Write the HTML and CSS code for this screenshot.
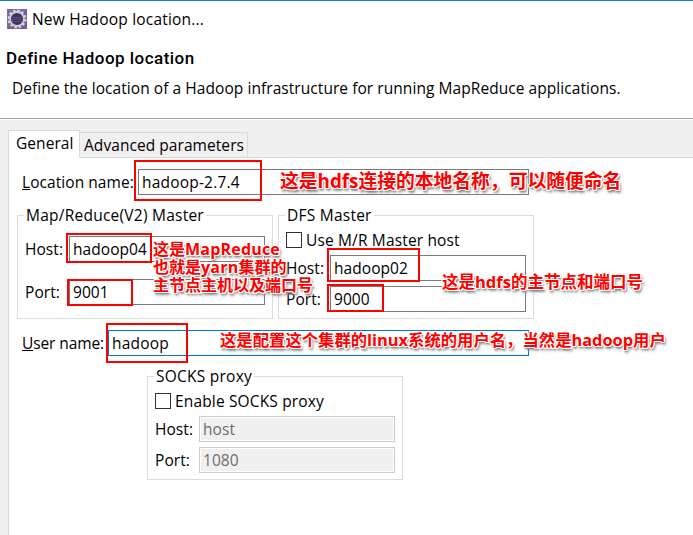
FILE: index.html
```html
<!DOCTYPE html>
<html lang="en">
<head>
<meta charset="utf-8">
<title>New Hadoop location...</title>
<link rel="stylesheet" href="styles.css">
</head>
<body>
<div class="dialog">
  <header class="header">
    <div class="titlebar">
      <svg class="app-icon" viewBox="0 0 20 20">
        <rect width="20" height="20" fill="#76599b"/>
        <path d="M0 0h20L0 20z" fill="#8a72aa" opacity=".55"/>
        <circle cx="10" cy="10" r="8.4" fill="none" stroke="#dcd8da" stroke-width="2" stroke-dasharray="2.6 1.8"/>
        <circle cx="10" cy="10" r="7" fill="#3d3358" stroke="#d0ccce" stroke-width="1.8"/>
        <path d="M4.5 8.5h11M4 10.5h12M4.5 12.5h11" stroke="#5f5088" stroke-width="1"/>
      </svg>
      <span class="title">New Hadoop location...</span>
    </div>
    <h1 class="heading">Define Hadoop location</h1>
    <p class="description">Define the location of a Hadoop infrastructure for running MapReduce applications.</p>
  </header>
  <main class="content">
    <nav class="tabs">
      <div class="tab active">General</div>
      <div class="tab advanced">Advanced parameters</div>
    </nav>
    <section class="page">
      <div class="row location"><label class="label"><u>L</u>ocation name:</label><div class="field">hadoop-2.7.4</div></div>
      <div class="groups">
        <div class="group master">
          <span class="legend">Map/Reduce(V2) Master</span>
          <div class="row"><label class="label">Host:</label><div class="field">hadoop04</div></div>
          <div class="row"><label class="label">Port:</label><div class="field">9001</div></div>
        </div>
        <div class="group dfs">
          <span class="legend">DFS Master</span>
          <div class="check"><span class="box"></span><span class="check-label">Use M/R Master host</span></div>
          <div class="row"><label class="label">Host:</label><div class="field">hadoop02</div></div>
          <div class="row"><label class="label">Port:</label><div class="field">9000</div></div>
        </div>
      </div>
      <div class="row user"><label class="label"><u>U</u>ser name:</label><div class="field focused">hadoop</div></div>
      <div class="group socks">
        <span class="legend">SOCKS proxy</span>
        <div class="check"><span class="box"></span><span class="check-label">Enable SOCKS proxy</span></div>
        <div class="row"><label class="label">Host:</label><div class="field disabled">host</div></div>
        <div class="row"><label class="label">Port:</label><div class="field disabled">1080</div></div>
      </div>
    </section>
  </main>
  <div class="mark mark-location"></div>
  <div class="mark mark-host"></div>
  <div class="mark mark-port"></div>
  <div class="mark mark-dfs-host"></div>
  <div class="mark mark-dfs-port"></div>
  <div class="mark mark-user"></div>
  <div class="note note-location">这是<span>hdfs</span>连接的本地名称，可以随便命名</div>
  <div class="note note-master">这是<span>MapReduce</span><br>也就是<span>yarn</span>集群的<br>主节点主机以及端口号</div>
  <div class="note note-dfs">这是<span>hdfs</span>的主节点和端口号</div>
  <div class="note note-user">这是配置这个集群的<span>linux</span>系统的用户名，当然是<span>hadoop</span>用户</div>
</div>
</body>
</html>
```
FILE: styles.css
```css
* { box-sizing: border-box; }
body {
  margin: 0;
  font: 15.5px/20px "Open Sans", "Noto Sans CJK SC", sans-serif;
  letter-spacing: .06px;
  color: #000;
  background: #fff;
}
.dialog {
  position: relative;
  width: 693px;
  height: 535px;
  overflow: hidden;
  display: flex;
  flex-direction: column;
  white-space: nowrap;
}
.header {
  height: 119px;
  flex: none;
  border-top: 1px solid #1a7fd4;
  border-bottom: 1px solid #a0a0a0;
}
.titlebar { display: flex; gap: 5px; padding: 8px 0 0 7px; }
.title { letter-spacing: .19px; }
.app-icon { width: 20px; height: 20px; }
.heading {
  margin: 19px 0 0 6px;
  font: 500 17px/20px Roboto, sans-serif;
  letter-spacing: .47px;
}
.description { margin: 10px 0 0 12px; }
.content {
  flex: 1;
  display: flex;
  flex-direction: column;
  padding: 11px 0 0 8px;
  background: #f0f0f0;
  border-top: 1px solid #fff;
}
.tabs { display: flex; align-items: flex-end; height: 26px; }
.tab { border: 1px solid #d9d9d9; border-bottom: 0; }
.tab.active {
  width: 72px;
  height: 28px;
  margin-bottom: -1px;
  padding: 2px 0 0 7px;
  background: #fff;
  position: relative;
}
.tab.advanced {
  width: 168px;
  height: 25px;
  border-left: 0;
  padding: 2px 0 0 4px;
}
.page {
  flex: 1;
  background: #fff;
  border: 1px solid #d9d9d9;
  border-right: 0;
  border-bottom: 0;
  padding: 11px 0 0 8px;
}
.row { display: flex; align-items: center; height: 26px; }
.label { flex: none; }
.field {
  flex: 1;
  height: 26px;
  border: 1px solid #7a7a7a;
  padding: 2px 0 0 3px;
}
.field.focused { border-color: #0078d7; }
.field.disabled {
  color: #6d6d6d;
  background: #f0f0f0;
  border-color: #ccc;
  box-shadow: inset 0 0 0 1px #fff;
}
.location { width: 512px; padding-left: 5px; }
.location .label { width: 116px; }
.location .field { letter-spacing: .2px; }
.user { width: 512px; padding-left: 5px; margin-top: 11px; }
.user .label { width: 86px; letter-spacing: -.1px; }
.user .field { letter-spacing: .2px; }
.groups { display: flex; gap: 5px; margin-top: 20px; }
.group {
  position: relative;
  width: 256px;
  height: 104px;
  border: 1px solid #dcdcdc;
  padding: 16px 7px 0;
}
.legend {
  position: absolute;
  top: -11px;
  left: 6px;
  padding: 0 2px;
  background: #fff;
  letter-spacing: .24px;
}
.group .label { width: 44px; }
.master { padding-top: 20px; }
.master .row + .row { margin-top: 17px; }
.check { display: flex; align-items: center; height: 16px; margin-bottom: 7px; letter-spacing: .15px; }
.box { width: 16px; height: 16px; border: 1px solid #333; margin-right: 4px; }
.group .check + .row + .row { margin-top: 5px; }
.socks { margin: 20px 0 0 130px; }
.mark { position: absolute; border: 2px solid #f00; }
.mark-location { left: 134px; top: 160px; width: 128px; height: 41px; }
.mark-host { left: 66px; top: 233px; width: 86px; height: 30px; }
.mark-port { left: 67px; top: 279px; width: 66px; height: 27px; }
.mark-dfs-host { left: 327px; top: 248px; width: 93px; height: 34px; }
.mark-dfs-port { left: 327px; top: 284px; width: 57px; height: 28px; }
.mark-user { left: 106px; top: 323px; width: 82px; height: 40px; }
.note {
  position: absolute;
  color: #f00;
  font: 700 16.5px/18px "Noto Sans CJK SC", sans-serif;
  letter-spacing: 0;
  text-shadow: 1px 0 #fff, -1px 0 #fff, 0 1px #fff, 0 -1px #fff,
    1px 1px #fff, -1px -1px #fff, 1px -1px #fff, -1px 1px #fff,
    1px 2px 2px #777, 2px 3px 3px #999;
}
.note span { font-family: "Open Sans", sans-serif; line-height: 0; }
.note-location { left: 280px; top: 171px; font-size: 18.8px; }
.note-master { left: 153px; top: 239px; font-size: 16px; line-height: 18px; }
.note-master span { letter-spacing: .2px; }
.note-dfs { left: 442px; top: 272px; }
.note-user { left: 220px; top: 330px; font-size: 16.35px; }
```
